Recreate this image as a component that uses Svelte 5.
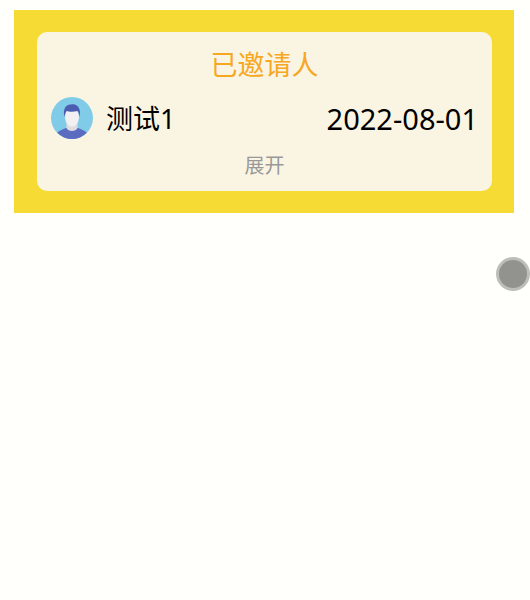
<script>
	let name = '测试1'
	let date = '2022-08-01'
</script>

<main>
	<section class="panel">
		<div class="card">
			<h1>已邀请人</h1>
			<div class="row">
				<svg class="avatar" viewBox="0 0 42 42">
					<defs>
						<clipPath id="round"><circle cx="21" cy="21" r="21" /></clipPath>
					</defs>
					<g clip-path="url(#round)">
						<rect width="42" height="42" fill="#7fcbe8" />
						<path d="M3 42 C4 36 8 33.5 15 31 L27 31 C34 33.5 38 36 39 42 Z" fill="#5b6cc0" />
						<path d="M15.5 24 L26.5 24 L26.5 31 C25 35 17 35 15.5 31 Z" fill="#dfdde2" />
						<ellipse cx="21" cy="20" rx="7" ry="9.5" fill="#f3f0f3" />
						<path d="M13.5 20 C11.5 12 15 7 20 7.5 C26 6 30.5 11 28.5 20 C28.2 17 27.8 15.5 26.5 14 C23 15 18 15 15.5 14 C14.4 15.5 13.8 17.5 13.5 20 Z" fill="#4c5cb0" />
					</g>
				</svg>
				<span class="name">{name}</span>
				<span class="date">{date}</span>
			</div>
			<div class="more">展开</div>
		</div>
	</section>
	<div class="ball"><span></span></div>
</main>

<style>
	:global(body){
		background: #fffffc;
	}

	main{
		height: 600px;
		padding: 10px 16px 0 14px;
		box-sizing: border-box;
		font-family: "Noto Sans", "Noto Sans CJK SC", sans-serif;
	}

	.panel{
		padding: 22px 22px 22px 23px;
		background: #f7db35;
	}

	.card{
		height: 159px;
		padding: 0 14px;
		box-sizing: border-box;
		display: flex;
		flex-direction: column;
		border-radius: 10px;
		background: #faf5e3;
	}

	h1{
		margin: 13px 0 0;
		font-size: 27px;
		line-height: 40px;
		font-weight: normal;
		text-align: center;
		color: #f6a823;
	}

	.row{
		margin-top: 11px;
		display: flex;
		align-items: center;
		color: #000;
		font-size: 27px;
		line-height: 42px;
	}

	.avatar{
		width: 42px;
		height: 42px;
		margin-right: 13px;
	}

	.name{
		padding-top: 2px;
	}

	.date{
		margin-left: auto;
		padding-top: 2px;
		font-size: 29px;
	}

	.more{
		margin-top: 12px;
		font-size: 20px;
		line-height: 28px;
		text-align: center;
		color: #999;
	}

	.ball{
		position: absolute;
		top: 257px;
		left: 496px;
		width: 34px;
		height: 34px;
		padding: 3px;
		box-sizing: border-box;
		border-radius: 50%;
		background: #bdbdb9;
	}

	.ball span{
		display: block;
		height: 100%;
		border-radius: 50%;
		background: #92928f;
	}
</style>
